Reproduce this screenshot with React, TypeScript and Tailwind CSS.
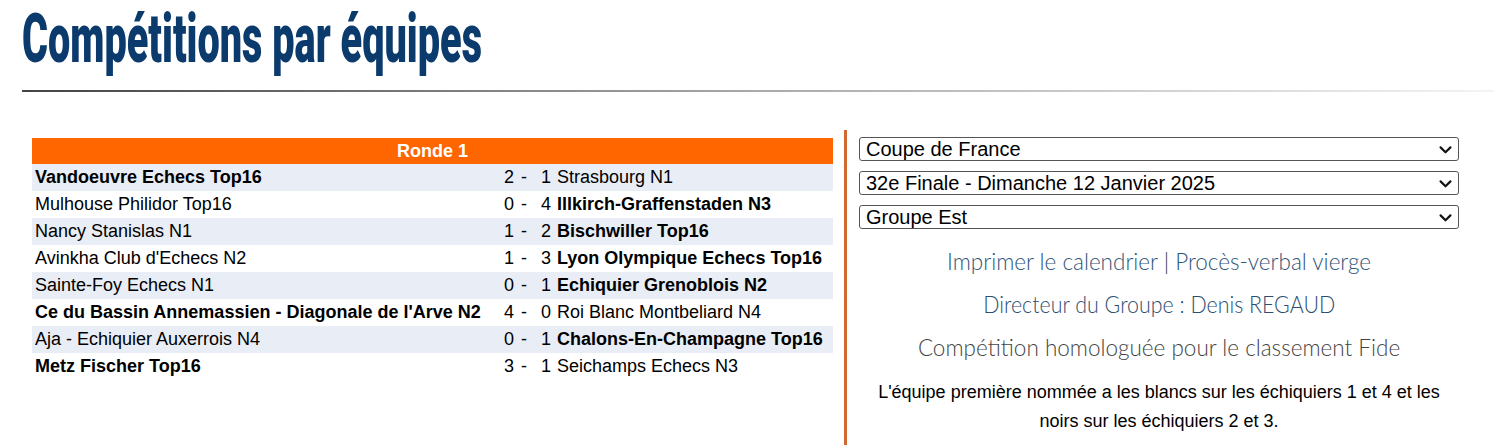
import React from "react";

type Match = { t1: string; s1: string; s2: string; t2: string; w: 1 | 2 };

const matches: Match[] = [
  { t1: "Vandoeuvre Echecs Top16", s1: "2", s2: "1", t2: "Strasbourg N1", w: 1 },
  { t1: "Mulhouse Philidor Top16", s1: "0", s2: "4", t2: "Illkirch-Graffenstaden N3", w: 2 },
  { t1: "Nancy Stanislas N1", s1: "1", s2: "2", t2: "Bischwiller Top16", w: 2 },
  { t1: "Avinkha Club d'Echecs N2", s1: "1", s2: "3", t2: "Lyon Olympique Echecs Top16", w: 2 },
  { t1: "Sainte-Foy Echecs N1", s1: "0", s2: "1", t2: "Echiquier Grenoblois N2", w: 2 },
  { t1: "Ce du Bassin Annemassien - Diagonale de l'Arve N2", s1: "4", s2: "0", t2: "Roi Blanc Montbeliard N4", w: 1 },
  { t1: "Aja - Echiquier Auxerrois N4", s1: "0", s2: "1", t2: "Chalons-En-Champagne Top16", w: 2 },
  { t1: "Metz Fischer Top16", s1: "3", s2: "1", t2: "Seichamps Echecs N3", w: 1 },
];

function Chevron() {
  return (
    <svg width="17" height="17" viewBox="0 0 24 24" fill="none" stroke="#111" strokeWidth="3" strokeLinecap="round" strokeLinejoin="round">
      <path d="M5 9l7 7 7-7" />
    </svg>
  );
}

function FakeSelect({ label }: { label: string }) {
  return (
    <div className="flex h-[24px] w-full items-center justify-between rounded-[3px] border border-[#555] bg-white pl-[6px] pr-[4px]">
      <span className="text-[20px] leading-none text-black" style={{ fontFamily: "'Liberation Sans', Arial, sans-serif" }}>
        {label}
      </span>
      <Chevron />
    </div>
  );
}

export default function App() {
  return (
    <div className="min-h-[445px] w-[1494px] overflow-hidden bg-white" style={{ fontFamily: "'Liberation Sans', Arial, sans-serif" }}>
      <div className="pl-[22px]">
        <h1
          className="mt-[5px] h-[68px] origin-left scale-x-[0.583] whitespace-nowrap text-[68px] font-black leading-[68px] text-[#0b3a6c]"
          style={{ fontFamily: "Roboto, sans-serif" }}
        >
          Compétitions par équipes
        </h1>
        <div className="mt-[17px] h-[2px] w-full bg-gradient-to-r from-[#444] via-[#aaa] to-[#f4f4f4]" />
      </div>

      <div className="mt-[38px] flex">
        <div className="ml-[32px] mt-[8px] w-[801px]">
          <div className="flex h-[26px] items-center justify-center bg-[#ff6600] text-[18px] font-bold text-white">Ronde 1</div>
          {matches.map((m, i) => (
            <div
              key={i}
              className={`grid h-[27px] grid-cols-[472px_16px_21px_16px_1fr] items-center text-[18px] text-black ${i % 2 === 0 ? "bg-[#e9edf5]" : "bg-white"}`}
            >
              <span className={`whitespace-nowrap pl-[3px] ${m.w === 1 ? "font-bold" : ""}`}>{m.t1}</span>
              <span>{m.s1}</span>
              <span className="pl-[1px]">-</span>
              <span>{m.s2}</span>
              <span className={`whitespace-nowrap ${m.w === 2 ? "font-bold" : ""}`}>{m.t2}</span>
            </div>
          ))}
        </div>

        <div className="ml-[11px] w-[3px] self-stretch bg-[#d0692f] min-h-[315px]" />

        <div className="ml-[12px] mt-[7px] w-[600px]">
          <div className="flex flex-col gap-[10px]">
            <FakeSelect label="Coupe de France" />
            <FakeSelect label="32e Finale - Dimanche 12 Janvier 2025" />
            <FakeSelect label="Groupe Est" />
          </div>
          <div className="mt-[11px] text-center text-[22.5px] font-light" style={{ fontFamily: "Lato, sans-serif" }}>
            <div className="leading-[43px] text-[#2f5679]">
              <span>Imprimer le calendrier</span>
              <span className="text-[#333]"> | </span>
              <span>Procès-verbal vierge</span>
            </div>
            <div className="leading-[43px] text-[#2c4e72]">
              <span className="inline-block origin-center scale-x-[0.95]">Directeur du Groupe : Denis REGAUD</span>
            </div>
            <div className="leading-[43px] text-[#444]">Compétition homologuée pour le classement Fide</div>
          </div>
          <p className="mt-[9px] px-[14px] text-center text-[18px] leading-[29px] text-black">
            L'équipe première nommée a les blancs sur les échiquiers 1 et 4 et les noirs sur les échiquiers 2 et 3.
          </p>
        </div>
      </div>
    </div>
  );
}
